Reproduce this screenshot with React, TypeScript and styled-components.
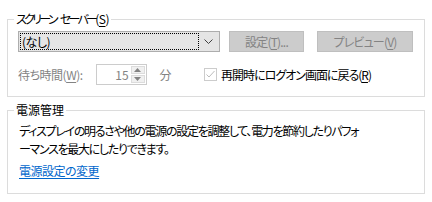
import React from "react";
import styled, { createGlobalStyle } from "styled-components";

const Global = createGlobalStyle`
  html, body { margin: 0; padding: 0; background: #ffffff; }
  body {
    font-family: "Noto Sans CJK JP", "Noto Sans", sans-serif;
    font-size: 12px;
    color: #000;
    font-feature-settings: "palt";
  }
`;

const Page = styled.div`
  width: 432px;
  height: 202px;
  box-sizing: border-box;
  padding: 12px 7px 0 7px;
  display: flex;
  flex-direction: column;
  gap: 6px;
`;

const Group = styled.fieldset<{ $h: number }>`
  margin: 0;
  border: 1px solid #dcdcdc;
  padding: 0 10px 0 10px;
  height: ${(p) => p.$h}px;
  box-sizing: border-box;
  min-width: 0;
`;

const Legend = styled.legend`
  padding: 0 2px 0 2px;
  margin-left: -4px;
  line-height: 14px;
  font-size: 12px;
  color: #000;
  display: flex;
  align-items: center;
`;

const Tight = styled.span<{ $ls: number }>`
  letter-spacing: ${(p) => p.$ls}px;
`;

const Gap = styled.span`
  display: inline-block;
  width: 4px;
`;

const Row = styled.div<{ $top: number }>`
  display: flex;
  align-items: center;
  margin-top: ${(p) => p.$top}px;
`;

const Combo = styled.div`
  width: 202px;
  height: 21px;
  box-sizing: border-box;
  border: 1px solid #adadad;
  background: #e5e5e5;
  display: flex;
  align-items: center;
  padding: 1px;
`;

const ComboFocus = styled.div`
  flex: 1;
  height: 100%;
  box-sizing: border-box;
  border: 1px dotted #000;
  display: flex;
  align-items: center;
  padding-left: 1px;
  line-height: 1;
  letter-spacing: -0.5px;
`;

const Chevron = styled.div`
  width: 19px;
  display: flex;
  justify-content: center;
  align-items: center;
`;

const Button = styled.div<{ $w: number; $ml: number }>`
  width: ${(p) => p.$w}px;
  margin-left: ${(p) => p.$ml}px;
  height: 21px;
  box-sizing: border-box;
  border: 1px solid #bfbfbf;
  background: #cccccc;
  color: #838383;
  display: flex;
  align-items: center;
  justify-content: center;
  line-height: 1;
  letter-spacing: -0.8px;
`;

const U = styled.span`
  text-decoration: underline;
  text-underline-offset: 2px;
`;

const Muted = styled.span<{ $ml?: number }>`
  color: #838383;
  line-height: 1;
  margin-left: ${(p) => p.$ml ?? 0}px;
  letter-spacing: -0.5px;
`;

const Spin = styled.div`
  margin-left: 13px;
  width: 51px;
  height: 21px;
  box-sizing: border-box;
  border: 1px solid #cccccc;
  display: flex;
`;

const SpinValue = styled.div`
  flex: 1;
  display: flex;
  align-items: center;
  justify-content: flex-end;
  padding-right: 2px;
  color: #838383;
  line-height: 1;
`;

const SpinArrows = styled.div`
  width: 15px;
  display: flex;
  flex-direction: column;
  gap: 1px;
  padding: 1px 1px 1px 0;
  box-sizing: border-box;
`;

const SpinBtn = styled.div`
  flex: 1;
  background: #f0f0f0;
  border: 1px solid #dcdcdc;
  display: flex;
  align-items: center;
  justify-content: center;
`;

const Check = styled.div`
  margin-left: 33px;
  width: 13px;
  height: 13px;
  box-sizing: border-box;
  border: 1px solid #cccccc;
  display: flex;
  align-items: center;
  justify-content: center;
  margin-right: 4px;
`;

const CheckLabel = styled.span`
  letter-spacing: -1px;
`;

const Text = styled.div<{ $top: number }>`
  margin-top: ${(p) => p.$top}px;
  line-height: 18px;
  padding-left: 1px;
  letter-spacing: -1.3px;
  white-space: nowrap;
`;

const Link = styled.a`
  display: inline-block;
  margin-top: 4px;
  padding-left: 1px;
  color: #0066cc;
  text-decoration: underline;
  text-underline-offset: 2px;
  line-height: 18px;
  letter-spacing: -0.5px;
`;

export default function App() {
  return (
    <>
      <Global />
      <Page>
        <Group $h={85}>
          <Legend>
            <Tight $ls={-2.7}>スクリーン</Tight>
            <Gap />
            <Tight $ls={-2.7}>セーバー</Tight>
            <Tight $ls={-0.5}>
              (<U>S</U>)
            </Tight>
          </Legend>
          <Row $top={5}>
            <Combo>
              <ComboFocus>(なし)</ComboFocus>
              <Chevron>
                <svg width="9" height="5" viewBox="0 0 9 5">
                  <path d="M0.5 0.5 L4.5 4.5 L8.5 0.5" fill="none" stroke="#404040" strokeWidth="1" />
                </svg>
              </Chevron>
            </Combo>
            <Button $w={75} $ml={9}>
              設定(<U>T</U>)...
            </Button>
            <Button $w={96} $ml={13}>
              プレビュー(<U>V</U>)
            </Button>
          </Row>
          <Row $top={12}>
            <Muted>
              待ち時間(<U>W</U>):
            </Muted>
            <Spin>
              <SpinValue>15</SpinValue>
              <SpinArrows>
                <SpinBtn>
                  <svg width="7" height="4" viewBox="0 0 7 4">
                    <path d="M0 4 L3.5 0 L7 4 Z" fill="#838383" />
                  </svg>
                </SpinBtn>
                <SpinBtn>
                  <svg width="7" height="4" viewBox="0 0 7 4">
                    <path d="M0 0 L3.5 4 L7 0 Z" fill="#838383" />
                  </svg>
                </SpinBtn>
              </SpinArrows>
            </Spin>
            <Muted $ml={13}>分</Muted>
            <Check>
              <svg width="11" height="11" viewBox="0 0 11 11">
                <path d="M1.5 5.5 L4 8 L9.5 2" fill="none" stroke="#bcbcbc" strokeWidth="1" />
              </svg>
            </Check>
            <CheckLabel>
              再開時にログオン画面に戻る(<U>R</U>)
            </CheckLabel>
          </Row>
        </Group>
        <Group $h={91}>
          <Legend>電源管理</Legend>
          <Text $top={5}>
            ディスプレイの明るさや他の電源の設定を調整して、電力を節約したりパフォ
            <br />
            ーマンスを最大にしたりできます。
          </Text>
          <Link>電源設定の変更</Link>
        </Group>
      </Page>
    </>
  );
}
